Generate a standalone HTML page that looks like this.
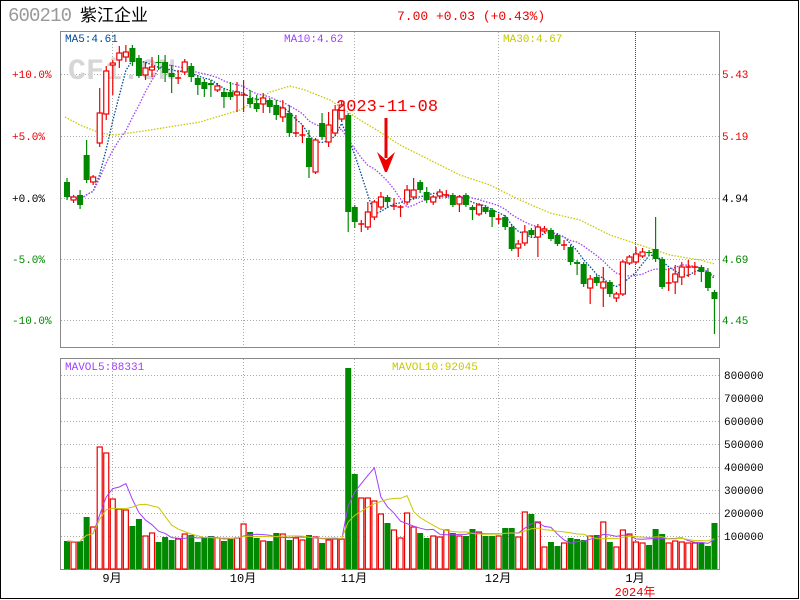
<!DOCTYPE html>
<html><head><meta charset="utf-8"><style>
html,body{margin:0;padding:0;background:#fff;width:800px;height:600px;overflow:hidden}
svg{display:block}
text{font-family:"Liberation Mono","Noto Sans CJK SC",monospace}
</style></head><body>
<svg id="s" width="800" height="600" xmlns="http://www.w3.org/2000/svg">
<rect x="0.5" y="0.5" width="798" height="598" fill="#fff" stroke="#000"/>
<text x="8" y="21" font-family="Liberation Sans" font-size="19" textLength="64" fill="#999">600210</text>
<text x="80" y="21" font-family="Noto Sans CJK SC" font-size="17" fill="#000">紫江企业</text>
<text x="397" y="20" font-size="13" fill="#e00">7.00 +0.03 (+0.43%)</text>
<g id="grid" stroke="#aaa" stroke-dasharray="1,2" stroke-width="1"></g>
<text x="68" y="79" font-family="Liberation Sans" font-weight="bold" font-size="30" fill="#d6d6d6">CFi.CN</text>
<rect x="60.5" y="31.5" width="659" height="316" fill="none" stroke="#888"/>
<rect x="60.5" y="358.5" width="659" height="211" fill="none" stroke="#888"/>
<line x1="635.5" y1="32" x2="635.5" y2="569" stroke="#e00" stroke-dasharray="1,1"/>
<g id="c"></g>
<text x="65" y="42" font-size="11" fill="#004c99">MA5:4.61</text>
<text x="284" y="42" font-size="11" fill="#a040ff">MA10:4.62</text>
<text x="503" y="42" font-size="11" fill="#c8c800">MA30:4.67</text>
<text x="65" y="370" font-size="11" fill="#a040ff">MAVOL5:88331</text>
<text x="392" y="370" font-size="11" fill="#c8c800">MAVOL10:92045</text>
<g font-size="11">
<text x="12" y="78" fill="#e00">+10.0%</text>
<text x="12" y="140" fill="#e00">+5.0%</text>
<text x="12" y="202" fill="#000">+0.0%</text>
<text x="12" y="263" fill="#080">-5.0%</text>
<text x="12" y="324" fill="#080">-10.0%</text>
<text x="722" y="78" fill="#e00">5.43</text>
<text x="722" y="140" fill="#e00">5.19</text>
<text x="722" y="202" fill="#000">4.94</text>
<text x="722" y="263" fill="#080">4.69</text>
<text x="722" y="324" fill="#080">4.45</text>
</g>
<g font-family="Liberation Sans" font-size="11" fill="#000">
<text x="724" y="379">800000</text><text x="724" y="402">700000</text><text x="724" y="425">600000</text>
<text x="724" y="448">500000</text><text x="724" y="471">400000</text><text x="724" y="494">300000</text>
<text x="724" y="517">200000</text><text x="724" y="540">100000</text>
</g>
<g font-family="Liberation Sans,Noto Sans CJK SC,sans-serif" font-size="12" fill="#000" text-anchor="middle">
<text x="112" y="582">9月</text><text x="243" y="582">10月</text><text x="354" y="582">11月</text>
<text x="498" y="582">12月</text><text x="635" y="582">1月</text>
<text x="635" y="596" fill="#e00">2024年</text>
</g>
<text x="336" y="111" font-size="17" fill="#e00">2023-11-08</text>
<line x1="386" y1="118" x2="386" y2="158" stroke="#e00" stroke-width="3"/>
<polygon points="377,152 386,160 395,152 387,172 385,172" fill="#e00"/>
</svg>
<script>
(function(){
var NS="http://www.w3.org/2000/svg",g=document.getElementById('c'),gr=document.getElementById('grid');
function el(t,a,p){var e=document.createElementNS(NS,t);for(var k in a)e.setAttribute(k,a[k]);(p||g).appendChild(e);return e;}
[74,136,198,259,320].forEach(function(y){el('line',{x1:61,x2:719,y1:y+.5,y2:y+.5},gr)});
for(var y=375;y<=536;y+=23)el('line',{x1:61,x2:719,y1:y+.5,y2:y+.5},gr);
[112,243,354,498].forEach(function(x){el('line',{x1:x+.5,x2:x+.5,y1:32,y2:347},gr);el('line',{x1:x+.5,x2:x+.5,y1:359,y2:569},gr)});
var D=[[182,197,178,200],[200,197,195,203],[195,205,190,209],[155,180,140,183],[182,177,175,185],[143,113,88,147],[114,71,66,120],[65,63,60,95],[60,53,46,68],[57,52,45,62],
[48,62,45,66],[58,76,55,78],[75,68,62,80],[70,67,57,77],[62,63,55,70],[62,73,55,82],[73,77,65,93],[78,78,70,84],[72,62,59,75],[66,77,63,82],
[78,85,75,95],[82,89,79,97],[83,85,80,97],[90,86,83,92],[92,97,88,108],[92,97,82,100],[95,92,82,112],[95,95,80,112],[98,104,90,108],[103,109,95,112],
[104,98,93,113],[100,107,98,113],[105,115,100,120],[117,108,100,122],[113,133,105,137],[133,133,115,137],[135,135,125,143],[138,167,130,178],[172,140,138,174],[123,137,113,140],
[142,125,112,147],[133,110,105,136],[119,105,101,122],[115,212,113,232],[207,222,205,228],[224,224,220,232],[227,212,202,230],[217,202,200,220],[207,197,192,210],[197,202,195,208],
[206,206,198,210],[207,207,205,217],[202,190,185,205],[197,190,178,199],[182,190,180,193],[192,200,187,203],[202,197,195,205],[196,192,189,199],[195,195,190,198],[195,205,193,207],
[204,197,195,212],[195,205,193,207],[207,210,205,220],[214,205,203,216],[207,212,205,214],[210,217,208,227],[219,219,214,224],[217,227,215,230],[227,249,225,251],[248,244,240,257],
[243,232,225,246],[230,235,228,238],[237,227,224,257],[231,229,226,233],[230,239,228,241],[235,244,233,246],[245,245,240,250],[247,262,245,265],[262,264,260,275],[264,284,262,287],
[288,279,275,304],[277,283,275,286],[288,282,267,307],[282,294,280,297],[298,294,292,302],[294,262,260,296],[263,257,255,265],[262,254,247,264],[256,252,248,258],[252,253,250,256],
[249,259,217,262],[259,287,257,289],[283,283,268,291],[282,274,265,294],[277,267,262,285],[267,267,260,277],[267,267,262,275],[267,272,265,282],[272,288,268,291],[292,299,290,334]];
var V=[541,542,541,517,527,447,453,499,509,510,526,519,536,533,542,537,540,539,534,535,542,538,536,538,541,539,538,524,532,538,541,541,533,534,540,538,540,535,537,543,540,539,539,368,474,498,498,501,514,523,530,538,
513,527,533,538,536,537,530,533,536,536,529,532,536,536,536,528,528,537,512,514,522,547,542,546,543,538,539,540,536,535,522,542,547,530,534,542,543,545,529,534,543,541,542,543,543,543,546,523];
function X(i){return 67+i*6.54;}
el('polyline',{points:"65,117 80,125 100,133 115,135 150,130 200,122 240,110 270,92 290,86 305,90 330,100 345,110 360,120 380,132 400,145 430,160 460,175 490,185 520,200 550,213 580,220 610,235 640,245 670,255 700,260 715,264",fill:'none',stroke:'#c8c800','stroke-dasharray':'1.5,1.5','stroke-width':1.3});
function ma(arr,n){var r=[];for(var i=0;i<arr.length;i++){var s=0,c=0;for(var j=Math.max(0,i-n+1);j<=i;j++){s+=arr[j];c++;}r.push(s/c);}return r;}
var C=D.map(function(d){return d[1]});
[[5,'#004c99'],[10,'#a040ff']].forEach(function(m){var a=ma(C,m[0]);el('polyline',{points:a.map(function(v,i){return X(i)+','+v}).join(' '),fill:'none',stroke:m[1],'stroke-dasharray':'1.5,1.5','stroke-width':1.3});});
for(var i=0;i<D.length;i++){var d=D[i],x=X(i);var red=d[1]<=d[0];var col=red?'#e00':'#080';
var bt=Math.min(d[0],d[1]),bb=Math.max(d[0],d[1]);
el('line',{x1:x,x2:x,y1:d[2],y2:d[3],stroke:col,'stroke-width':1.2});
if(bb-bt<1){el('line',{x1:x-3,x2:x+3,y1:bt,y2:bt,stroke:col,'stroke-width':1.5});}
else if(red)el('rect',{x:x-2.5,y:bt,width:5,height:bb-bt,fill:'#fff',stroke:col,'stroke-width':1.2});
else el('rect',{x:x-3,y:bt,width:6,height:bb-bt,fill:col});
var vt=V[i];if(red)el('rect',{x:x-2.5,y:vt,width:5,height:569-vt,fill:'#fff',stroke:'#e00','stroke-width':1.2});else el('rect',{x:x-3,y:vt,width:6,height:569-vt,fill:'#080'});}
var VV=V.map(function(v){return 569-v});
[[5,'#a040ff'],[10,'#c8c800']].forEach(function(m){var a=ma(VV,m[0]);el('polyline',{points:a.map(function(v,i){return X(i)+','+(569-v)}).join(' '),fill:'none',stroke:m[1],'stroke-width':1});});
})();
</script>
</body></html>
